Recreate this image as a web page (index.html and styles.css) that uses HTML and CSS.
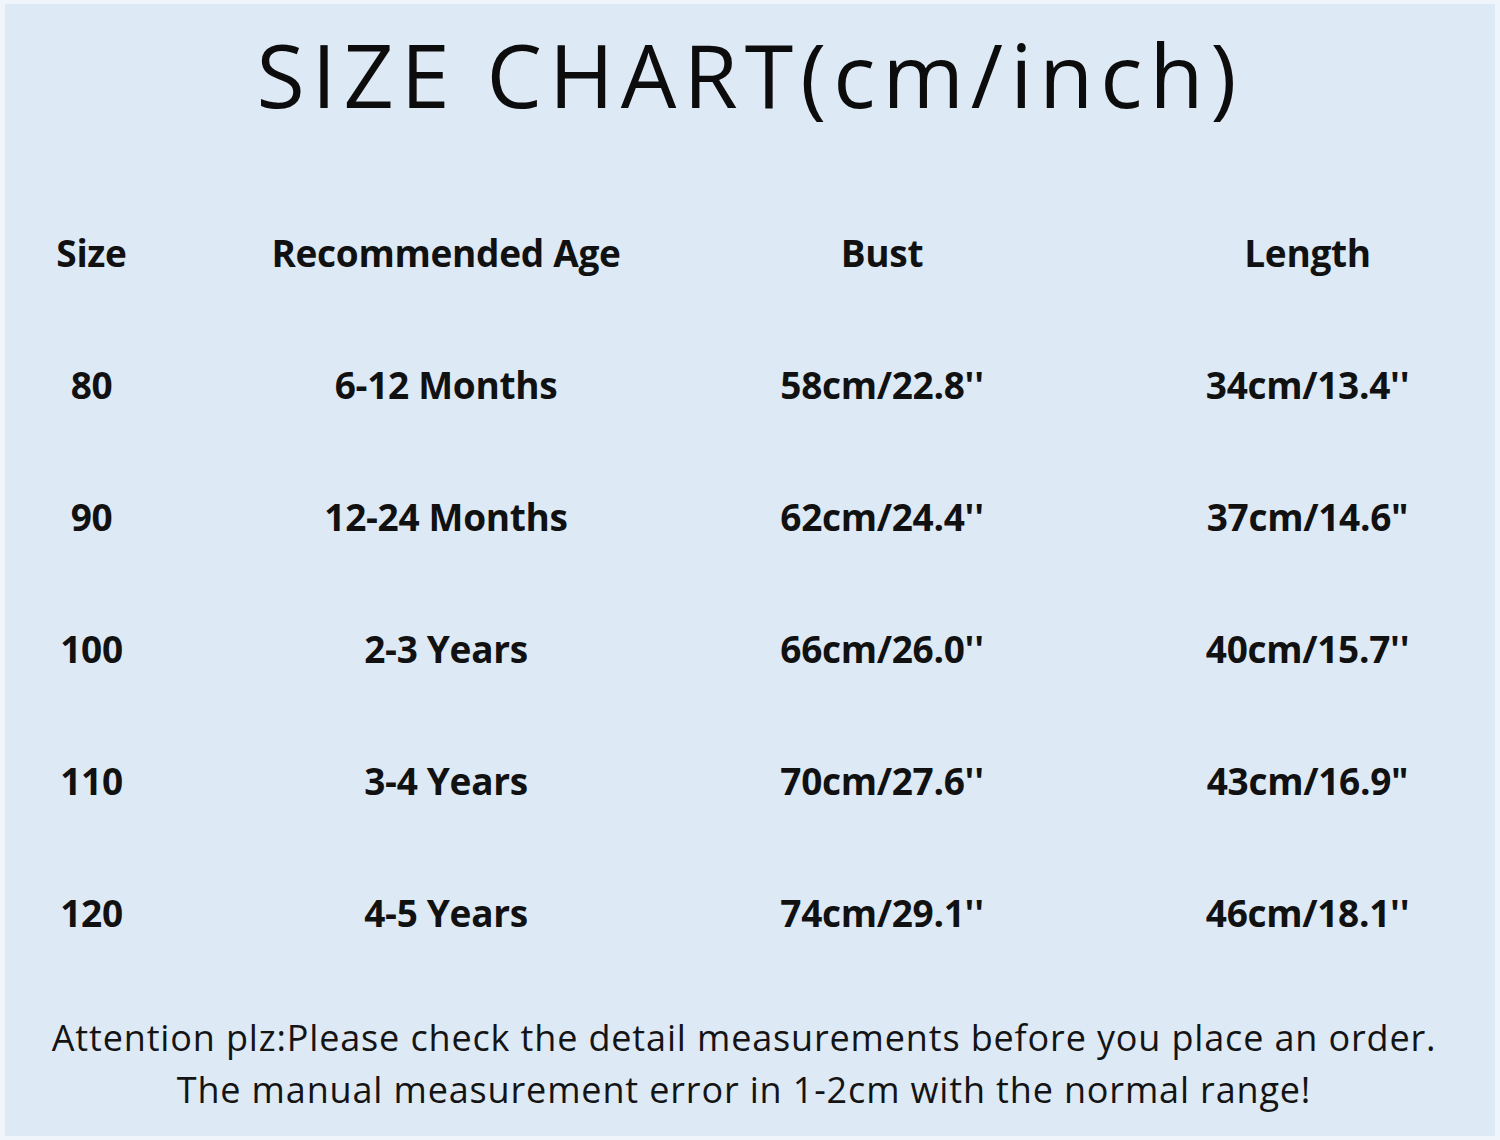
FILE: index.html
```html
<!DOCTYPE html>
<html>
<head>
<meta charset="utf-8">
<link rel="stylesheet" href="styles.css">
</head>
<body>
<div class="panel">
  <h1 class="title">SIZE CHART(cm/inch)</h1>
  <div class="chart">
    <div class="row head">
      <div class="c c1">Size</div><div class="c c2">Recommended Age</div><div class="c c3">Bust</div><div class="c c4">Length</div>
    </div>
    <div class="row">
      <div class="c c1">80</div><div class="c c2">6-12 Months</div><div class="c c3">58cm/22.8''</div><div class="c c4">34cm/13.4''</div>
    </div>
    <div class="row">
      <div class="c c1">90</div><div class="c c2">12-24 Months</div><div class="c c3">62cm/24.4''</div><div class="c c4">37cm/14.6"</div>
    </div>
    <div class="row">
      <div class="c c1">100</div><div class="c c2">2-3 Years</div><div class="c c3">66cm/26.0''</div><div class="c c4">40cm/15.7''</div>
    </div>
    <div class="row">
      <div class="c c1">110</div><div class="c c2">3-4 Years</div><div class="c c3">70cm/27.6''</div><div class="c c4">43cm/16.9"</div>
    </div>
    <div class="row">
      <div class="c c1">120</div><div class="c c2">4-5 Years</div><div class="c c3">74cm/29.1''</div><div class="c c4">46cm/18.1''</div>
    </div>
  </div>
  <div class="note">
    <p>Attention plz:Please check the detail measurements before you place an order.</p>
    <p>The manual measurement error in 1-2cm with the normal range!</p>
  </div>
</div>
</body>
</html>
```
FILE: styles.css
```css
html, body {
  margin: 0;
  padding: 0;
  background: #eff5fa;
}
body {
  width: 1500px;
  height: 1140px;
  overflow: hidden;
  padding: 4px 5px 4px 5px;
  box-sizing: border-box;
}
.panel {
  background: #dde9f5;
  height: 1132px;
  color: #111;
  font-family: "Open Sans", "Noto Sans", sans-serif;
}
.title {
  margin: 0;
  padding-top: 20px;
  height: 182px;
  box-sizing: border-box;
  text-align: center;
  font-weight: 400;
  font-size: 88px;
  line-height: 100px;
  letter-spacing: 7px;
  color: #0c0c0c;
}
.chart {
  display: flex;
  flex-direction: column;
}
.row {
  display: grid;
  grid-template-columns: 173px 530px 348px 1fr;
  height: 132px;
  align-items: center;
  font-weight: 700;
  font-size: 37px;
  letter-spacing: -0.3px;
}
.c {
  text-align: center;
  white-space: nowrap;
}
.c2 {
  padding-left: 6px;
}
.c4 {
  padding-left: 64px;
}
.note {
  margin-top: 34px;
  padding-right: 12px;
  text-align: center;
  font-size: 36px;
  line-height: 52px;
  letter-spacing: 0.85px;
  color: #141414;
}
.note p {
  margin: 0;
  white-space: nowrap;
}
```
